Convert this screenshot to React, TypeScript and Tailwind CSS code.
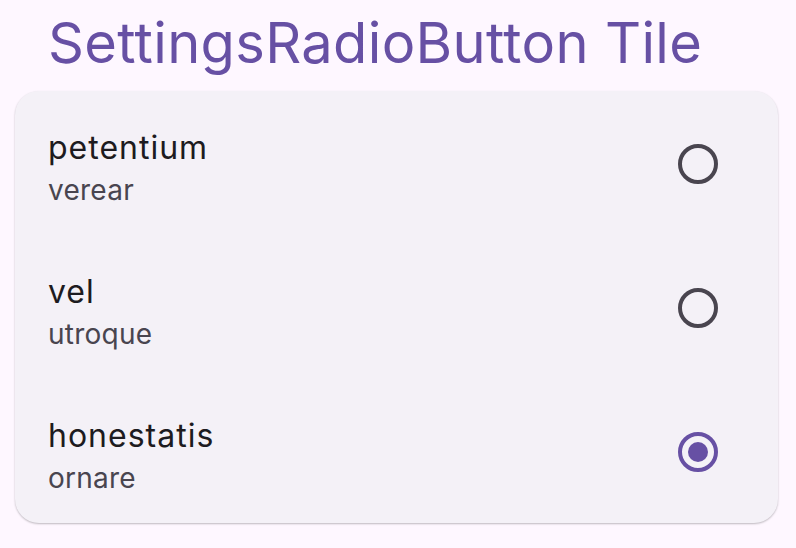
import React, { useState } from 'react';

const items = [
  { title: 'petentium', subtitle: 'verear' },
  { title: 'vel', subtitle: 'utroque' },
  { title: 'honestatis', subtitle: 'ornare' },
];

function Radio({ checked }: { checked: boolean }) {
  return (
    <svg width="40" height="40" viewBox="0 0 40 40" className="mt-[2px]">
      <circle cx="20" cy="20" r="18" fill="none" stroke={checked ? '#6750a4' : '#49454f'} strokeWidth="4" />
      {checked && <circle cx="20" cy="20" r="10" fill="#6750a4" />}
    </svg>
  );
}

export default function App() {
  const [selected, setSelected] = useState(2);

  return (
    <div className="w-full h-[548px] bg-[#fef7ff] font-['Inter',sans-serif] overflow-hidden">
      <h1 className="pl-[48px] pt-[10px] text-[56px] leading-[66px] tracking-[0.35px] text-[#6750a4] font-normal">
        SettingsRadioButton Tile
      </h1>
      <div className="mt-[15px] ml-[15px] mr-[18px] rounded-[24px] bg-[#f4f1f7] shadow-[0_1px_2px_rgba(0,0,0,0.25)]">
        {items.map((item, idx) => (
          <div
            key={item.title}
            onClick={() => setSelected(idx)}
            className="h-[144px] flex items-center justify-between pl-[33px] pr-[60px] cursor-pointer"
          >
            <div className="flex flex-col mt-[10px]">
              <span className="text-[32px] leading-[44px] tracking-[1px] text-[#1d1b20]">{item.title}</span>
              <span className="text-[28px] leading-[40px] tracking-[0.25px] text-[#49454f]">{item.subtitle}</span>
            </div>
            <Radio checked={selected === idx} />
          </div>
        ))}
      </div>
    </div>
  );
}
